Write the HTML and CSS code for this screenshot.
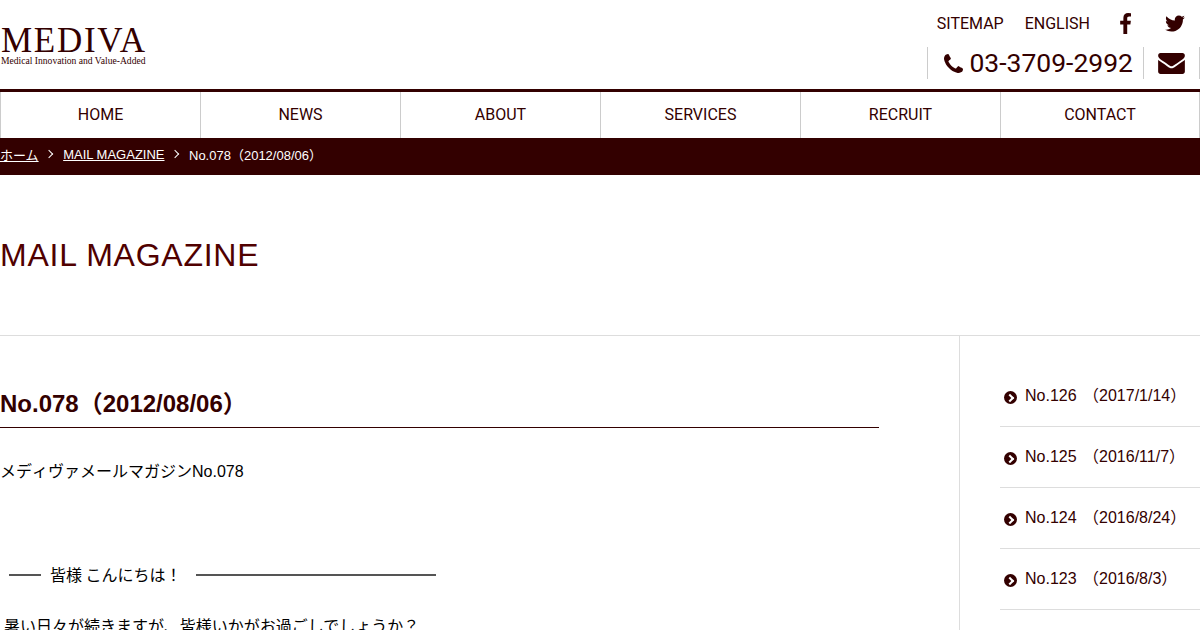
FILE: index.html
```html
<!DOCTYPE html>
<html lang="ja">
<head>
  <meta charset="UTF-8">
  <meta name="viewport" content="width=device-width, initial-scale=1.0">
  <title>MAIL MAGAZINE | MEDIVA</title>
  <link rel="stylesheet" href="styles.css">
</head>
<body>
  <header class="header">
    <a class="logo" href="#">
      <span class="logo-name">MEDIVA</span>
      <span class="logo-sub">Medical Innovation and Value-Added</span>
    </a>
    <div class="header-right">
      <div class="header-links">
        <a href="#">SITEMAP</a>
        <a href="#">ENGLISH</a>
        <a class="icon-link fb" href="#" aria-label="Facebook">
          <svg width="12" height="21" viewBox="385 0 958 1664"><path d="M1343 12v264h-157q-86 0-116 36t-30 108v189h293l-39 296h-254v759h-306v-759h-255v-296h255v-218q0-186 104-288.500t277-102.500q147 0 228 12z"/></svg>
        </a>
        <a class="icon-link tw" href="#" aria-label="Twitter">
          <svg width="20" height="17" viewBox="100 250 1590 1290"><path d="M1684 408q-67 98-162 167 1 14 1 42 0 130-38 259.500t-115.500 248.500-184.500 210.500-258 146-323 54.500q-271 0-496-145 35 4 78 4 225 0 401-138-105-2-188-64.500t-114-159.500q33 5 61 5 43 0 85-11-112-23-185.500-111.500t-73.500-205.500v-4q68 38 146 41-66-44-105-115t-39-154q0-88 44-163 121 149 294.500 238.500t371.500 99.500q-8-38-8-74 0-134 94.500-228.500t228.500-94.500q140 0 236 102 109-21 205-78-37 115-142 178 100-11 200-54z"/></svg>
        </a>
      </div>
      <div class="header-contact">
        <div class="tel">
          <svg width="19" height="19" viewBox="192 128 1408 1408"><path d="M1600 1240q0 27-10 70.500t-21 68.500q-21 50-122 106-94 51-186 51-27 0-53-3.500t-57.500-12.500-47-14.500-55.500-20.500-49-18q-98-35-175-83-127-79-264-216t-216-264q-48-77-83-175-3-9-18-49t-20.500-55.500-14.500-47-12.500-57.500-3.500-53q0-92 51-186 56-101 106-122 25-11 68.500-21t70.500-10q14 0 21 3 18 6 53 76 11 19 30 54t35 63.500 31 53.500q3 4 17.500 25t21.500 35.500 7 28.500q0 20-28.500 50t-62 55-62 53-28.500 46q0 9 5 22.500t8.500 20.500 14 24 11.500 19q76 137 174 235t235 174q2 1 19 11.500t24 14 20.500 8.500 22.500 5q18 0 46-28.500t53-62 55-62 50-28.500q14 0 28.500 7t35.500 21.500 25 17.500q25 15 53.500 31t63.500 35 54 30q70 35 76 53 3 7 3 21z"/></svg>
          <span>03-3709-2992</span>
        </div>
        <a class="mail" href="#" aria-label="Mail">
          <svg width="27" height="21" viewBox="0 256 1792 1408"><path d="M1792 710v794q0 66-47 113t-113 47h-1472q-66 0-113-47t-47-113v-794q44 49 101 87 362 246 497 345 57 42 92.500 65.500t94.500 48 110 24.500h2q51 0 110-24.500t94.500-48 92.500-65.500q170-123 498-345 57-39 100-87zm0-294q0 79-49 151t-122 123q-376 261-468 325-10 7-42.500 30.500t-54 38-52 32.500-57.500 27-50 9h-2q-23 0-50-9t-57.500-27-52-32.500-54-38-42.500-30.500q-91-64-262-182.500t-205-142.500q-62-42-117-115.500t-55-136.500q0-78 41.500-130t118.500-52h1472q65 0 112.500 47t47.500 113z"/></svg>
        </a>
      </div>
    </div>
  </header>

  <nav class="gnav">
    <a href="#">HOME</a>
    <a href="#">NEWS</a>
    <a href="#">ABOUT</a>
    <a href="#">SERVICES</a>
    <a href="#">RECRUIT</a>
    <a href="#">CONTACT</a>
  </nav>

  <div class="breadcrumb">
    <a href="#">ホーム</a>
    <span class="sep"></span>
    <a href="#">MAIL MAGAZINE</a>
    <span class="sep"></span>
    <span>No.078（2012/08/06）</span>
  </div>

  <div class="page-title">
    <h1>MAIL MAGAZINE</h1>
  </div>

  <div class="content">
    <main class="main">
      <h2>No.078（2012/08/06）</h2>
      <p class="lead">メディヴァメールマガジンNo.078</p>
      <div class="greeting">
        <span class="rule-short"></span>
        <span>皆様 こんにちは！</span>
        <span class="rule-long"></span>
      </div>
      <p class="body-text">暑い日々が続きますが、皆様いかがお過ごしでしょうか？</p>
    </main>
    <aside class="side">
      <ul>
        <li><a href="#">No.126 （2017/1/14）</a></li>
        <li><a href="#">No.125 （2016/11/7）</a></li>
        <li><a href="#">No.124 （2016/8/24）</a></li>
        <li><a href="#">No.123 （2016/8/3）</a></li>
      </ul>
    </aside>
  </div>
</body>
</html>
```

FILE: styles.css
```css
html, body {
  height: 630px;
  overflow: hidden;
}
body {
  margin: 0;
  padding: 0;
  background-color: #fff;
  color: #000;
  font-family: "Liberation Sans", Arial, "Noto Sans CJK JP", sans-serif;
  font-size: 16px;
}
a {
  color: inherit;
  text-decoration: none;
}

/* header */
.header {
  height: 89px;
  display: flex;
  justify-content: space-between;
  border-bottom: 3px solid #330000;
  color: #330000;
}
.logo {
  display: block;
  padding: 25px 0 0 1px;
  width: 147px;
}
.logo-name {
  display: block;
  font-family: "Liberation Serif", serif;
  font-size: 35px;
  line-height: 31px;
  letter-spacing: 1.700px;
  white-space: nowrap;
}
.logo-sub {
  display: block;
  margin-top: -1px;
  font-family: "Liberation Serif", serif;
  font-size: 9.600px;
  line-height: 11px;
  white-space: nowrap;
}
.header-right {
  display: flex;
  flex-direction: column;
  align-items: flex-end;
}
.header-links {
  display: flex;
  align-items: center;
  height: 47px;
  font-family: Roboto, sans-serif;
  font-size: 16px;
  padding-right: 15px;
}
.header-links a {
  margin-left: 21px;
}
.header-links .icon-link {
  display: flex;
}
.header-links .fb {
  margin-left: 29px;
}
.header-links .tw {
  margin-left: 34px;
}
.icon-link svg, .tel svg, .mail svg {
  fill: #330000;
}
.header-contact {
  display: flex;
  height: 32px;
}
.tel {
  display: flex;
  align-items: center;
  gap: 6px;
  padding: 0 10px 0 16px;
  border-left: 1px solid #ccc;
  border-right: 1px solid #ccc;
  font-family: Roboto, sans-serif;
  font-size: 26.500px;
}
.tel span {
  padding-bottom: 2px;
}
.mail {
  display: flex;
  align-items: center;
  width: 56px;
  padding-left: 14px;
  box-sizing: border-box;
  border-right: 1px solid #ccc;
}

/* global nav */
.gnav {
  display: flex;
  height: 46px;
}
.gnav a {
  flex: 0 0 200px;
  box-sizing: border-box;
  display: flex;
  align-items: center;
  justify-content: center;
  padding-bottom: 2px;
  border-left: 1px solid #ccc;
  font-family: Roboto, sans-serif;
  font-size: 16px;
  color: #330000;
}
.gnav a:last-child {
  border-right: 1px solid #ccc;
}

/* breadcrumb */
.breadcrumb {
  height: 37px;
  box-sizing: border-box;
  padding-bottom: 5px;
  display: flex;
  align-items: center;
  background-color: #330000;
  color: #fff;
  font-size: 13px;
}
.breadcrumb a {
  text-decoration: underline;
}
.sep {
  width: 5px;
  height: 5px;
  margin: 0 11.500px 0 7px;
  border-top: 1px solid #fff;
  border-right: 1px solid #fff;
  transform: rotate(45deg);
}

/* title */
.page-title {
  height: 160px;
  display: flex;
  align-items: center;
  border-bottom: 1px solid #ddd;
}
h1 {
  margin: 0;
  font-size: 32px;
  font-weight: normal;
  letter-spacing: 0.750px;
  color: #500000;
}

/* content */
.content {
  display: flex;
}
.main {
  width: 879px;
  padding: 51px 80px 0 0;
  border-right: 1px solid #ddd;
}
h2 {
  margin: 0 0 32px;
  padding-bottom: 6px;
  font-size: 24px;
  line-height: 34px;
  color: #330000;
  border-bottom: 1px solid #330000;
}
.lead {
  margin: 0;
  line-height: 24px;
  font-kerning: none;
}
.greeting {
  display: flex;
  align-items: center;
  width: 436px;
  margin-top: 80px;
  padding-left: 9px;
  box-sizing: border-box;
  line-height: 24px;
  word-spacing: -1px;
}
.rule-short {
  width: 32px;
  height: 2px;
  margin: 0 9px 2px 0;
  background-color: #555;
}
.rule-long {
  flex: 1;
  height: 2px;
  margin: 0 0 2px 15px;
  background-color: #555;
}
.body-text {
  margin: 27px 0 0;
  padding-left: 4px;
  line-height: 24px;
}

/* side list */
.side {
  width: 200px;
  padding: 30px 0 0 40px;
}
.side ul {
  margin: 0;
  padding: 0;
  list-style: none;
}
.side li {
  height: 60px;
  border-bottom: 1px solid #ddd;
  color: #330000;
}
.side a {
  display: block;
  position: relative;
  padding-left: 25px;
  line-height: 60px;
  white-space: nowrap;
  word-spacing: 2px;
}
.side a::before {
  content: "";
  position: absolute;
  left: 4px;
  top: 25px;
  width: 13px;
  height: 13px;
  border-radius: 50%;
  background-color: #330000;
}
.side a::after {
  content: "";
  position: absolute;
  left: 7px;
  top: 29px;
  width: 4px;
  height: 4px;
  border-top: 2px solid #fff;
  border-right: 2px solid #fff;
  transform: rotate(45deg);
}
```
